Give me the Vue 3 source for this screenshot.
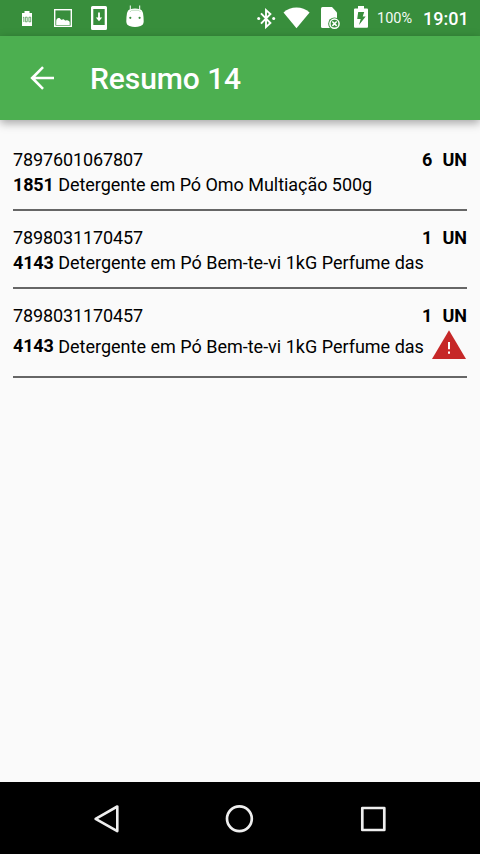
<script setup>
const items = [
  { barcode: '7897601067807', qty: 6, unit: 'UN', code: '1851', name: 'Detergente em Pó Omo Multiação 500g', alert: false },
  { barcode: '7898031170457', qty: 1, unit: 'UN', code: '4143', name: 'Detergente em Pó Bem-te-vi 1kG Perfume das', alert: false },
  { barcode: '7898031170457', qty: 1, unit: 'UN', code: '4143', name: 'Detergente em Pó Bem-te-vi 1kG Perfume das', alert: true },
]
</script>

<template>
  <div class="screen">
    <div class="status">
      <div class="notifications">
        <svg class="level" width="12" height="36" viewBox="21 0 12 36">
          <path fill="#fff" d="M24.500 11h5v2H32v13H22V13h2.500z" />
          <path fill="none" stroke="#388e3c" stroke-width=".7" d="M22.900 17.700l.9-.6V22M25.400 17.200h1.800v4.600h-1.800zM28.900 17.200h1.800v4.600h-1.800z" />
        </svg>
        <svg class="photo" width="20" height="36" viewBox="53 0 20 36">
          <rect x="54.700" y="9.700" width="16.600" height="16.600" fill="none" stroke="#fff" stroke-width="1.400" />
          <path fill="#fff" d="M56.200 25v-3.500c0-2 1-3.500 2.500-3.500 1 0 1.500.5 2 1.200.5.7 1.200.7 1.800.4.900-.5 1.500-.2 2 .3.700.6 1.400.5 2.200.4 1.500-.2 3 .8 3 2.200v2.500z" />
        </svg>
        <svg class="download" width="18" height="36" viewBox="90 0 18 36">
          <path fill="#fff" fill-rule="evenodd" d="M92.500 6h13q1.500 0 1.500 1.500v21q0 1.500-1.500 1.500h-13Q91 30 91 28.500v-21Q91 6 92.500 6zM93.300 9v16h11.400V9z" />
          <path fill="#fff" d="M98.100 12.500h1.800v5h2.300L99 21.200l-3.200-3.700h2.300z" />
        </svg>
        <svg class="android" width="20" height="36" viewBox="125 0 20 36">
          <path fill="none" stroke="#fff" stroke-width="1" d="M130.300 5.500v4M139.700 5.500v4" />
          <path fill="#fff" d="M130 9.200q5-1.500 10 0 2.300.8 3 3.800.8 4.500.7 8.500-.1 3.500-3.200 4.500-5.500 1.800-11 0-3.100-1-3.200-4.500-.1-4 .7-8.500.7-3 3-3.800z" />
          <path fill="none" stroke="#b9dbba" stroke-width=".9" d="M130 12l1.500-1.700h7.500L140.500 12" />
          <circle cx="130.300" cy="17.800" r="1.100" fill="#388e3c" />
          <circle cx="139.600" cy="17.800" r="1.100" fill="#388e3c" />
        </svg>
      </div>
      <svg class="bluetooth" width="20" height="36" viewBox="256 0 20 36">
        <path fill="none" stroke="#fff" stroke-width="1.900" d="M261 13.400l9.400 9.600-4.400 4.100V10.100l4.400 3.900-9.400 9.600" />
        <circle cx="258.700" cy="18.500" r="1.500" fill="#fff" />
        <circle cx="273.700" cy="18.500" r="1.500" fill="#fff" />
      </svg>
      <svg class="wifi" width="28" height="36" viewBox="283 0 28 36">
        <path fill="#fff" d="M283.500 12.500Q289 7.600 296.500 7.600t13.100 4.900L296.500 28.200z" />
      </svg>
      <svg class="sim" width="22" height="36" viewBox="320 0 22 36">
        <path fill="#fff" d="M322.500 7H332l5 5.500V28h-14.500q-1.500 0-1.500-1.500v-18Q321 7 322.500 7z" />
        <circle cx="334.500" cy="23.700" r="6.300" fill="#388e3c" />
        <circle cx="334.500" cy="23.700" r="4.600" fill="none" stroke="#fff" stroke-width="1.500" />
        <path stroke="#fff" stroke-width="1.500" d="M332.300 21.500l4.400 4.400M336.700 21.500l-4.400 4.400" />
      </svg>
      <svg class="charging" width="16" height="36" viewBox="353 0 16 36">
        <path fill="#fff" d="M358 6h6v2.500h3q1 0 1 1v17q0 1.300-1 1.300h-12q-1 0-1-1.300v-17q0-1 1-1h3z" />
        <path fill="#388e3c" d="M358.200 12h6l-1.500 4.400h3L359 25l1.700-6h-3.500z" />
      </svg>
      <span class="percent">100%</span>
      <span class="clock">19:01</span>
    </div>

    <header class="appbar">
      <svg class="back" width="36" height="36" viewBox="0 0 24 24">
        <path fill="#fff" d="M20 11.200H7.600l5.700-5.800L12.100 4.200 4.200 12l7.900 7.800 1.200-1.200-5.700-5.800H20z" />
      </svg>
      <h1>Resumo 14</h1>
    </header>

    <main>
      <section v-for="(item, i) in items" :key="i" class="item">
        <div class="top">
          <span class="barcode">{{ item.barcode }}</span>
          <span class="amount"><b>{{ item.qty }}</b><b>{{ item.unit }}</b></span>
        </div>
        <div class="product" :class="{ flagged: item.alert }">
          <b class="code">{{ item.code }}</b>
          <span class="name">{{ item.name }}</span>
          <svg v-if="item.alert" class="warning" width="36" height="35" viewBox="0 0 36 35">
            <path fill="#c62828" d="M18 1.300L35 30H1z" />
            <path fill="#fff" d="M17 13h2v7.300h-2zM17 22.600h2v2.200h-2z" />
          </svg>
        </div>
      </section>
    </main>

    <nav>
      <svg width="28" height="30" viewBox="0 0 28 30">
        <path fill="none" stroke="#eee" stroke-width="2.600" stroke-linejoin="round" d="M25.300 2.500v24.600L3.600 14.800z" />
      </svg>
      <svg width="30" height="30" viewBox="0 0 30 30">
        <circle cx="14.400" cy="14.800" r="12.400" fill="none" stroke="#eee" stroke-width="2.700" />
      </svg>
      <svg width="28" height="30" viewBox="0 0 28 30">
        <rect x="3.300" y="4" width="22" height="22" fill="none" stroke="#eee" stroke-width="2.700" stroke-linejoin="round" />
      </svg>
    </nav>
  </div>
</template>

<style>
body {
  margin: 0;
}
</style>

<style scoped>
.screen {
  display: flex;
  flex-direction: column;
  width: 480px;
  height: 854px;
  overflow: hidden;
  background: #fafafa;
  color: #000;
  font-family: Roboto, sans-serif;
}
svg {
  display: block;
  flex: none;
}
.status {
  display: flex;
  align-items: center;
  height: 36px;
  background: #388e3c;
  color: #fff;
  white-space: nowrap;
}
.notifications {
  display: flex;
  width: 256px;
}
.level { margin-left: 21px; }
.photo { margin-left: 20px; }
.download { margin-left: 17px; }
.android { margin-left: 17px; }
.wifi { margin-left: 7px; }
.sim { margin-left: 9px; }
.charging { margin-left: 11px; }
.percent {
  width: 46px;
  margin-left: 8px;
  font-size: 14.500px;
  color: #f4faf4;
}
.clock {
  font-size: 18px;
  font-weight: 500;
}
.appbar {
  display: flex;
  align-items: center;
  flex: none;
  height: 84px;
  padding-left: 24px;
  background: #4caf50;
  color: #fff;
  box-shadow: 0 3px 9px rgba(0, 0, 0, 0.35);
}
h1 {
  margin: 0 0 0 30px;
  padding-top: 2px;
  font-size: 30px;
  line-height: 36px;
  font-weight: 500;
  letter-spacing: -0.080px;
}
main {
  flex: 1;
  padding: 13px 13px 0;
  font-size: 18px;
}
.item {
  padding: 14px 0 12px;
  border-bottom: 2px solid #666;
}
.top {
  display: flex;
  justify-content: space-between;
  line-height: 26px;
}
.barcode {
  letter-spacing: -0.110px;
}
.amount {
  display: flex;
  gap: 10px;
}
.product {
  display: flex;
  align-items: center;
  height: 24px;
  line-height: 24px;
  white-space: nowrap;
}
.product:not(.flagged) {
  line-height: 22px;
  padding-bottom: 0;
  align-items: flex-start;
  padding-top: 1px;
  box-sizing: border-box;
}
.flagged {
  height: 35px;
  line-height: 22px;
}
.code {
  letter-spacing: -0.200px;
}
.flagged .code {
  padding-bottom: 2px;
}
.name {
  margin-left: 4.700px;
}
.item:first-child .name {
  letter-spacing: -0.040px;
}
.warning {
  margin-left: auto;
}
nav {
  display: flex;
  align-items: center;
  justify-content: space-between;
  height: 72px;
  padding: 1px 93px 0 92px;
  box-sizing: border-box;
  background: #000;
}
</style>
